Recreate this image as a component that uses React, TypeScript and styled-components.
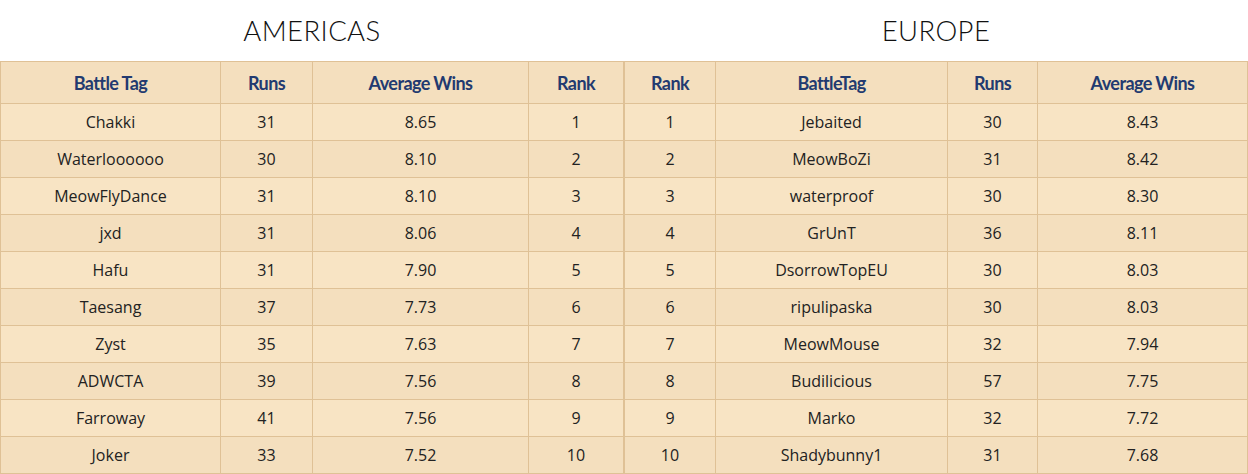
import React from 'react'
import styled, { createGlobalStyle } from 'styled-components'

const GlobalStyle = createGlobalStyle`
  body {
    margin: 0;
    background: #ffffff;
  }
`

const Page = styled.div`
  display: flex;
  width: 1248px;
`

const Region = styled.section`
  flex: 0 0 624px;
  display: flex;
  flex-direction: column;
`

const RegionTitle = styled.h2`
  margin: 0;
  height: 61px;
  display: flex;
  align-items: center;
  justify-content: center;
  font-family: Lato, 'Liberation Sans', sans-serif;
  font-weight: 300;
  font-size: 27.5px;
  letter-spacing: 0.4px;
  color: #111111;
  box-sizing: border-box;
`

const Table = styled.table`
  width: 623px;
  border-collapse: collapse;
  table-layout: fixed;
  border: 1px solid #dfc196;
`

const HeadCell = styled.th<{ $w: number }>`
  width: ${p => p.$w}px;
  height: 41px;
  padding: 0;
  background: #f4dfbe;
  border: 1px solid #dfc196;
  font-family: Lato, 'Liberation Sans', sans-serif;
  font-weight: 700;
  font-size: 18px;
  letter-spacing: -0.6px;
  color: #223a70;
  text-align: center;
`

const Row = styled.tr<{ $odd: boolean }>`
  background: ${p => (p.$odd ? '#f8e4c4' : '#f4dfbe')};
`

const Cell = styled.td`
  height: 36px;
  padding: 0;
  border: 1px solid #dfc196;
  font-family: 'Open Sans', 'Liberation Sans', sans-serif;
  font-size: 16px;
  color: #222222;
  text-align: center;
`

type Entry = { rank: number; tag: string; runs: number; avg: string }

const americas: Entry[] = [
  { rank: 1, tag: 'Chakki', runs: 31, avg: '8.65' },
  { rank: 2, tag: 'Waterloooooo', runs: 30, avg: '8.10' },
  { rank: 3, tag: 'MeowFlyDance', runs: 31, avg: '8.10' },
  { rank: 4, tag: 'jxd', runs: 31, avg: '8.06' },
  { rank: 5, tag: 'Hafu', runs: 31, avg: '7.90' },
  { rank: 6, tag: 'Taesang', runs: 37, avg: '7.73' },
  { rank: 7, tag: 'Zyst', runs: 35, avg: '7.63' },
  { rank: 8, tag: 'ADWCTA', runs: 39, avg: '7.56' },
  { rank: 9, tag: 'Farroway', runs: 41, avg: '7.56' },
  { rank: 10, tag: 'Joker', runs: 33, avg: '7.52' }
]

const europe: Entry[] = [
  { rank: 1, tag: 'Jebaited', runs: 30, avg: '8.43' },
  { rank: 2, tag: 'MeowBoZi', runs: 31, avg: '8.42' },
  { rank: 3, tag: 'waterproof', runs: 30, avg: '8.30' },
  { rank: 4, tag: 'GrUnT', runs: 36, avg: '8.11' },
  { rank: 5, tag: 'DsorrowTopEU', runs: 30, avg: '8.03' },
  { rank: 6, tag: 'ripulipaska', runs: 30, avg: '8.03' },
  { rank: 7, tag: 'MeowMouse', runs: 32, avg: '7.94' },
  { rank: 8, tag: 'Budilicious', runs: 57, avg: '7.75' },
  { rank: 9, tag: 'Marko', runs: 32, avg: '7.72' },
  { rank: 10, tag: 'Shadybunny1', runs: 31, avg: '7.68' }
]

const App: React.FC = () => (
  <>
    <GlobalStyle />
    <Page>
      <Region>
        <RegionTitle>AMERICAS</RegionTitle>
        <Table>
          <thead>
            <tr>
              <HeadCell $w={219}>Battle Tag</HeadCell>
              <HeadCell $w={91}>Runs</HeadCell>
              <HeadCell $w={215}>Average Wins</HeadCell>
              <HeadCell $w={94}>Rank</HeadCell>
            </tr>
          </thead>
          <tbody>
            {americas.map((e, i) => (
              <Row key={e.rank} $odd={i % 2 === 0}>
                <Cell>{e.tag}</Cell>
                <Cell>{e.runs}</Cell>
                <Cell>{e.avg}</Cell>
                <Cell>{e.rank}</Cell>
              </Row>
            ))}
          </tbody>
        </Table>
      </Region>
      <Region>
        <RegionTitle>EUROPE</RegionTitle>
        <Table>
          <thead>
            <tr>
              <HeadCell $w={90}>Rank</HeadCell>
              <HeadCell $w={231}>BattleTag</HeadCell>
              <HeadCell $w={89}>Runs</HeadCell>
              <HeadCell $w={209}>Average Wins</HeadCell>
            </tr>
          </thead>
          <tbody>
            {europe.map((e, i) => (
              <Row key={e.rank} $odd={i % 2 === 0}>
                <Cell>{e.rank}</Cell>
                <Cell>{e.tag}</Cell>
                <Cell>{e.runs}</Cell>
                <Cell>{e.avg}</Cell>
              </Row>
            ))}
          </tbody>
        </Table>
      </Region>
    </Page>
  </>
)

export default App
